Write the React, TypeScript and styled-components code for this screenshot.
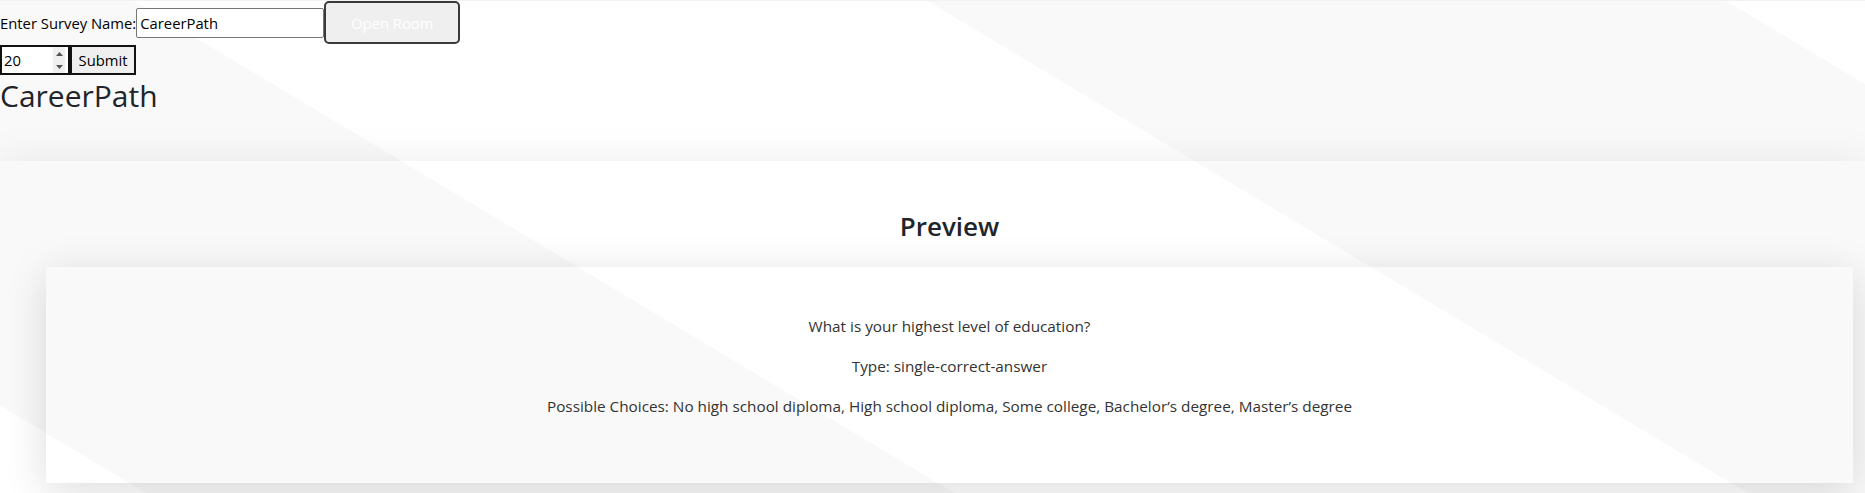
import React from "react";
import styled, { createGlobalStyle } from "styled-components";

const GlobalStyle = createGlobalStyle`
  html, body {
    margin: 0;
    padding: 0;
  }
  body {
    font-family: "Segoe UI", "Open Sans", "Noto Sans", sans-serif;
    color: #000;
  }
  * { box-sizing: border-box; }
`;

const Page = styled.div`
  min-height: 100vh;
  background-color: #fff;
  background-image: linear-gradient(
    30.96deg,
    #ffffff 0px 75px,
    #f9f9f9 75px 491px,
    #ffffff 491px 899px,
    #f9f9f9 899px 1310px,
    #ffffff 1310px
  );
  background-attachment: fixed;
  overflow: hidden;
`;

const TopBar = styled.header`
  height: 161px;
  box-shadow: inset 0 1px 0 #f2f2f2;
`;

const FieldRow = styled.div<{ $height: number }>`
  display: flex;
  align-items: center;
  height: ${(p) => p.$height}px;
`;

const Label = styled.label`
  font-size: 14.8px;
  color: #000;
  white-space: nowrap;
`;

const TextInput = styled.input`
  width: 188px;
  height: 30px;
  border: 1px solid #767676;
  border-radius: 2px;
  padding: 0 3px;
  font-family: inherit;
  font-size: 14.8px;
  color: #000;
  background: #fff;
  outline: none;
`;

const RoomButton = styled.button`
  width: 136px;
  height: 43px;
  border: 2px solid #3a3a3a;
  border-radius: 5px;
  background: #efefef;
  color: #fff;
  font-family: inherit;
  font-size: 14.8px;
  padding: 0;
`;

const NumberWrap = styled.div`
  position: relative;
  width: 70px;
  height: 30px;
`;

const NumberInput = styled.input`
  width: 70px;
  height: 30px;
  border: 2px solid #111;
  border-radius: 0;
  padding: 0 2px;
  font-family: inherit;
  font-size: 14.8px;
  color: #000;
  background: #fff;
  outline: none;
  appearance: textfield;
  -moz-appearance: textfield;
  &::-webkit-inner-spin-button,
  &::-webkit-outer-spin-button {
    -webkit-appearance: none;
    margin: 0;
  }
`;

const Spinner = styled.span`
  position: absolute;
  top: 2px;
  right: 5px;
  width: 12px;
  height: 26px;
  background: #f0f0f0;
  display: flex;
  flex-direction: column;
  align-items: center;
  justify-content: space-around;
`;

const SubmitButton = styled.button`
  height: 30px;
  width: 66px;
  border: 2px solid #111;
  border-radius: 0;
  background: #efefef;
  color: #000;
  font-family: inherit;
  font-size: 14.8px;
  padding: 0;
`;

const Title = styled.h1`
  margin: 0;
  font-size: 30px;
  font-weight: 500;
  line-height: 41px;
  color: #212529;
`;

const PreviewSection = styled.section`
  position: relative;
  padding: 46px 12px 10px 46px;
  box-shadow: 0 0 40px rgba(0, 0, 0, 0.075);
`;

const SectionHeading = styled.h2`
  margin: 0 0 22px;
  text-align: center;
  font-size: 26px;
  font-weight: 600;
  line-height: 38px;
  color: #212529;
`;

const Card = styled.div`
  height: 216px;
  padding: 47px 0 0;
  text-align: center;
  box-shadow: 0 8px 40px rgba(0, 0, 0, 0.14);
`;

const Line = styled.p`
  margin: 0 0 16px;
  font-size: 15.3px;
  line-height: 24px;
  color: #333;
`;

const Arrow = ({ up }: { up?: boolean }) => (
  <svg width="7" height="4" viewBox="0 0 7 4">
    <path d={up ? "M0 4 L3.5 0 L7 4 Z" : "M0 0 L3.5 4 L7 0 Z"} fill="#555" />
  </svg>
);

export default function App() {
  return (
    <>
      <GlobalStyle />
      <Page>
        <TopBar>
          <FieldRow $height={45}>
            <Label htmlFor="survey-name">Enter Survey Name:</Label>
            <TextInput id="survey-name" defaultValue="CareerPath" />
            <RoomButton>Open Room</RoomButton>
          </FieldRow>
          <FieldRow $height={30}>
            <NumberWrap>
              <NumberInput type="number" defaultValue={20} />
              <Spinner>
                <Arrow up />
                <Arrow />
              </Spinner>
            </NumberWrap>
            <SubmitButton>Submit</SubmitButton>
          </FieldRow>
          <Title>CareerPath</Title>
        </TopBar>
        <PreviewSection>
          <SectionHeading>Preview</SectionHeading>
          <Card>
            <Line>What is your highest level of education?</Line>
            <Line>Type: single-correct-answer</Line>
            <Line>
              Possible Choices: No high school diploma, High school diploma, Some college,
              Bachelor’s degree, Master’s degree
            </Line>
          </Card>
        </PreviewSection>
      </Page>
    </>
  );
}
